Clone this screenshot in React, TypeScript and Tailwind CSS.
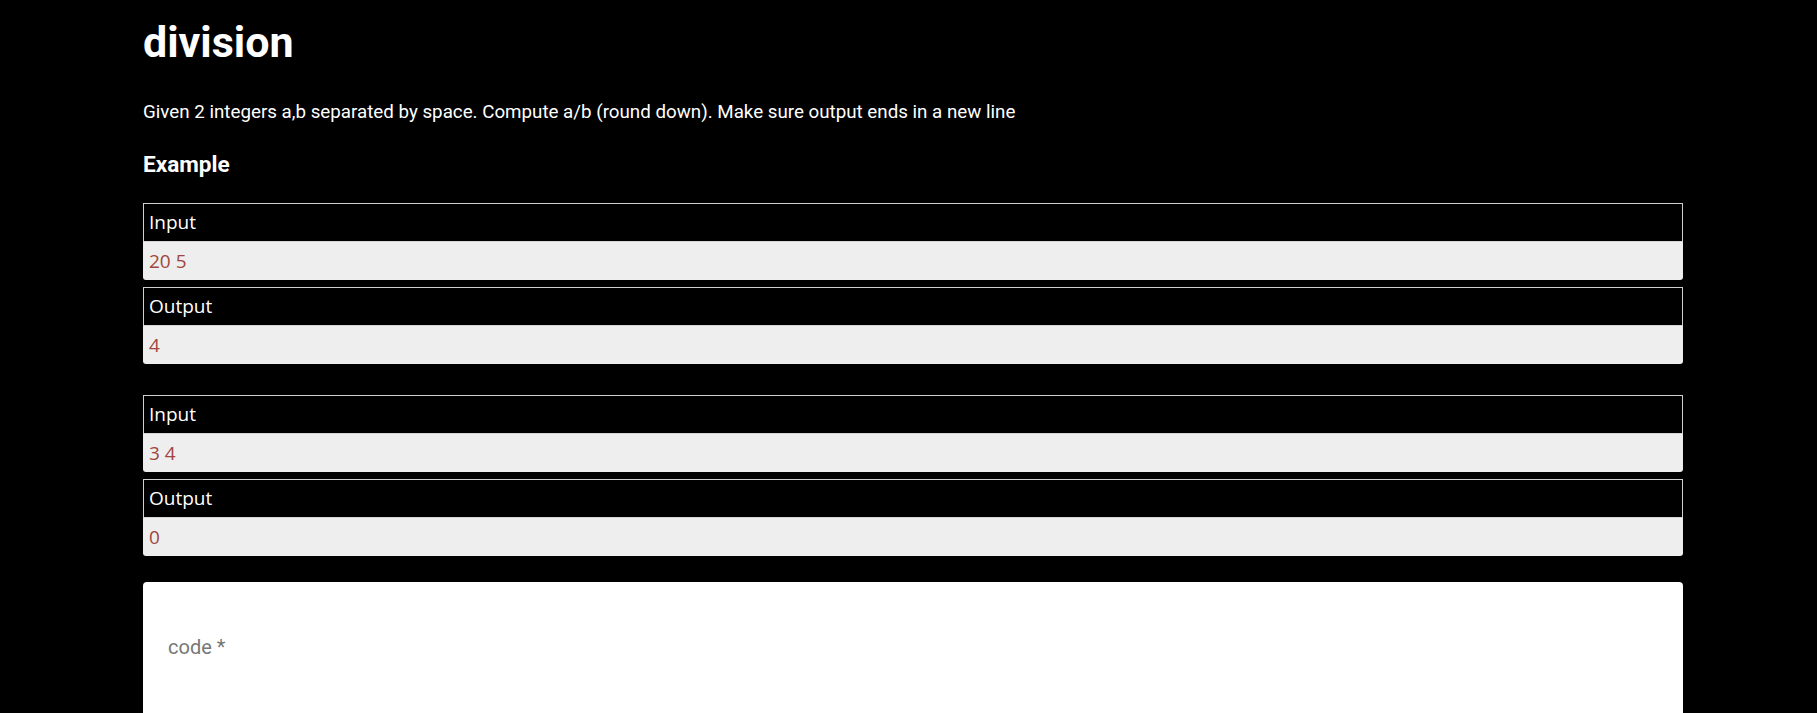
import React from "react";

function Sample({ input, output }: { input: string; output: string }) {
  return (
    <div className="flex flex-col gap-[7px]">
      <Block label="Input" value={input} />
      <Block label="Output" value={output} />
    </div>
  );
}

function Block({ label, value }: { label: string; value: string }) {
  return (
    <div className="flex flex-col">
      <div className="h-[38px] border-x border-t border-[#d0d0d0] bg-black pl-[5px] text-[19px] leading-[37px] text-white">
        {label}
      </div>
      <div className="h-[39px] rounded-b-[3px] border-t border-[#d6d6d6] bg-[#eeeeee] pl-[6px] text-[19px] leading-[38px] text-[#a0463e]">
        {value}
      </div>
    </div>
  );
}

export default function App() {
  return (
    <div className="min-h-[713px] bg-black">
      <div className="ml-[143px] w-[1540px]">
        <h1
          className="pt-[16px] text-[43px] font-bold leading-[52px] text-white"
          style={{ fontFamily: "Roboto, sans-serif" }}
        >
          division
        </h1>
        <p
          className="mt-[32px] text-[18.75px] leading-[24px] text-white"
          style={{ fontFamily: "Roboto, sans-serif" }}
        >
          Given 2 integers a,b separated by space. Compute a/b (round down). Make sure output ends in a new line
        </p>
        <h3
          className="mt-[27px] text-[22.6px] font-bold leading-[28px] text-white"
          style={{ fontFamily: "Roboto, sans-serif" }}
        >
          Example
        </h3>
        <div
          className="mt-[24px] flex flex-col gap-[31px]"
          style={{ fontFamily: "'Open Sans', sans-serif" }}
        >
          <Sample input="20 5" output="4" />
          <Sample input="3 4" output="0" />
        </div>
        <div className="mt-[26px] h-[200px] rounded-t-[4px] bg-white pl-[25px] pt-[53px]">
          <span
            className="text-[20px] leading-[24px] text-[#777777]"
            style={{ fontFamily: "Roboto, sans-serif" }}
          >
            code *
          </span>
        </div>
      </div>
    </div>
  );
}
